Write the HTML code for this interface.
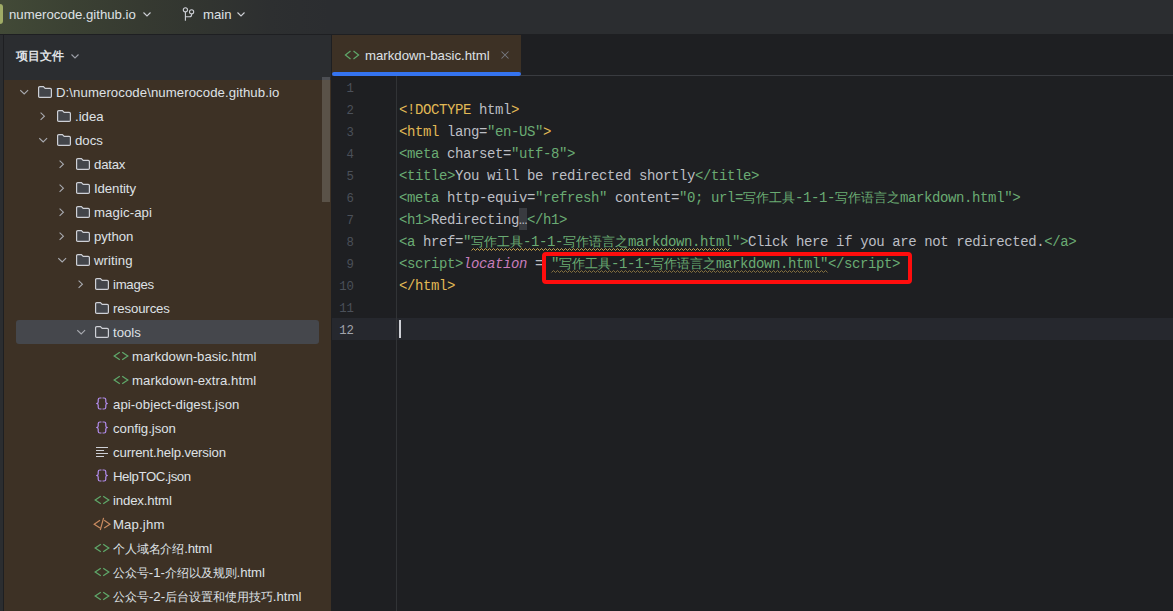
<!DOCTYPE html>
<html><head><meta charset="utf-8">
<style>
*{margin:0;padding:0;box-sizing:border-box}
html,body{width:1173px;height:611px;overflow:hidden;background:#1e1f22;font-family:"Liberation Sans",sans-serif;}
.abs{position:absolute}
#top{left:0;top:0;width:1173px;height:34px;background:linear-gradient(90deg,#424a37 0px,#3b4133 70px,#363a31 140px,#313430 210px,#2d2f30 270px,#2b2d30 330px,#2b2d30 1173px);}
#topline{left:0;top:34px;width:1173px;height:1px;background:#1e1f22}
#proj{left:0;top:4px;width:3px;height:20px;background:#a0ad66;border-radius:0 3px 3px 0}
.ui{color:#dfe1e5;font-size:13.2px;white-space:nowrap;line-height:16px}
#strip{left:0;top:35px;width:4px;height:576px;background:#2b2d30;border-right:1px solid #1e1f22}
#phead{left:4px;top:35px;width:327px;height:45px;background:#2b2d30}
#tree{left:4px;top:80px;width:327px;height:531px;background:#3d3125}
#divider{left:331px;top:34px;width:1px;height:577px;background:#1e1f22}
#sel{left:16px;top:320px;width:303px;height:24px;background:#45474c;border-radius:3px}
#sb{left:322px;top:80px;width:8px;height:122px;background:#5a5248;}
#sbtop{left:322px;top:77px;width:8px;height:3px;background:#4c4e53}
.row{position:absolute;height:24px;line-height:24px;color:#dfe1e5;font-size:13.2px;white-space:nowrap}
#tabbar{left:332px;top:34px;width:841px;height:42px;background:#1e1f22;border-bottom:1px solid #393b40}
#tab{left:332px;top:35px;width:189px;height:41px;background:#3d3125}
#tabline{left:332px;top:72px;width:189px;height:4px;background:#3574f0;border-radius:2px}
#gutterline{left:396px;top:76px;width:1px;height:535px;background:#313336}
#curline{left:332px;top:318px;width:841px;height:22px;background:#26282e}
.ln{position:absolute;left:332px;width:22px;text-align:right;color:#4b5059;font-family:"Liberation Mono",monospace;font-size:12.3px;height:22px;line-height:22px}
.code{position:absolute;left:399px;color:#bcbec4;font-family:"Liberation Mono",monospace;font-size:14px;letter-spacing:-0.4px;height:22px;line-height:22px;white-space:pre}
.g{color:#e2b955}.v{color:#6aab73}.p{color:#c77dbb;font-style:italic}
.ell{}
.cj{display:inline-block;width:13px;overflow:visible;font-size:12.5px;letter-spacing:0;font-weight:300}
#redbox{left:542px;top:252px;width:370px;height:32px;border:4px solid #ff0d0d;border-radius:4px}
#caret{left:399px;top:320px;width:2px;height:18px;background:#ced0d6}
</style></head><body>
<div id="top" class="abs"></div>
<div id="topline" class="abs"></div>
<div id="proj" class="abs"></div>
<div class="abs ui" style="left:9px;top:7px">numerocode.github.io</div>
<svg class="abs" style="left:142px;top:9px" width="10" height="10" viewBox="0 0 10 10"><path d="M1.5 3.5 L5 7 L8.5 3.5" fill="none" stroke="#ced0d6" stroke-width="1.1"/></svg>
<svg class="abs" style="left:182px;top:6px" width="14" height="18" viewBox="0 0 14 18"><circle cx="3.4" cy="3.8" r="2.1" fill="none" stroke="#ced0d6" stroke-width="1.1"/><circle cx="9.6" cy="5.8" r="2.1" fill="none" stroke="#ced0d6" stroke-width="1.1"/><path d="M3.4 5.9 V14.8 M9.6 7.9 V8.7 Q9.6 10.7 7.6 10.7 H3.4" fill="none" stroke="#ced0d6" stroke-width="1.1"/></svg>
<div class="abs ui" style="left:203px;top:7px">main</div>
<svg class="abs" style="left:236px;top:9px" width="10" height="10" viewBox="0 0 10 10"><path d="M1.5 3.5 L5 7 L8.5 3.5" fill="none" stroke="#ced0d6" stroke-width="1.1"/></svg>
<div id="strip" class="abs"></div>
<div id="phead" class="abs"></div>
<div class="abs ui" style="left:16px;top:48px;font-weight:bold;font-size:12px">项目文件</div>
<svg class="abs" style="left:70px;top:51px" width="10" height="10" viewBox="0 0 10 10"><path d="M1.5 3.5 L5 7 L8.5 3.5" fill="none" stroke="#9da0a8" stroke-width="1.1"/></svg>
<div id="tree" class="abs"></div>
<div id="sel" class="abs"></div>
<div id="sb" class="abs"></div>
<div id="sbtop" class="abs"></div>
<div id="divider" class="abs"></div>
<svg class="abs" style="left:20px;top:89px" width="9" height="7" viewBox="0 0 9 7"><path d="M0.3 1.2 L4.2 5 L8.1 1.2" fill="none" stroke="#a8aab0" stroke-width="1.1"/></svg>
<svg class="abs" style="left:38px;top:86px" width="14" height="12" viewBox="0 0 14 12"><path d="M0.6 1.8 Q0.6 0.6 1.8 0.6 H5.4 L7.2 2.4 H12.2 Q13.4 2.4 13.4 3.6 V10.2 Q13.4 11.4 12.2 11.4 H1.8 Q0.6 11.4 0.6 10.2 Z" fill="#43454a" stroke="#ced0d6" stroke-width="1.2"/></svg>
<div class="row" style="left:56px;top:81px;letter-spacing:0.079px">D:\numerocode\numerocode.github.io</div>
<svg class="abs" style="left:40px;top:111px" width="7" height="10" viewBox="0 0 7 10"><path d="M0.6 1.6 L4.4 5.2 L0.6 8.8" fill="none" stroke="#a8aab0" stroke-width="1.1"/></svg>
<svg class="abs" style="left:57px;top:110px" width="14" height="12" viewBox="0 0 14 12"><path d="M0.6 1.8 Q0.6 0.6 1.8 0.6 H5.4 L7.2 2.4 H12.2 Q13.4 2.4 13.4 3.6 V10.2 Q13.4 11.4 12.2 11.4 H1.8 Q0.6 11.4 0.6 10.2 Z" fill="#43454a" stroke="#ced0d6" stroke-width="1.2"/></svg>
<div class="row" style="left:75px;top:105px;letter-spacing:0.000px">.idea</div>
<svg class="abs" style="left:39px;top:137px" width="9" height="7" viewBox="0 0 9 7"><path d="M0.3 1.2 L4.2 5 L8.1 1.2" fill="none" stroke="#a8aab0" stroke-width="1.1"/></svg>
<svg class="abs" style="left:57px;top:134px" width="14" height="12" viewBox="0 0 14 12"><path d="M0.6 1.8 Q0.6 0.6 1.8 0.6 H5.4 L7.2 2.4 H12.2 Q13.4 2.4 13.4 3.6 V10.2 Q13.4 11.4 12.2 11.4 H1.8 Q0.6 11.4 0.6 10.2 Z" fill="#43454a" stroke="#ced0d6" stroke-width="1.2"/></svg>
<div class="row" style="left:75px;top:129px;letter-spacing:0.000px">docs</div>
<svg class="abs" style="left:59px;top:159px" width="7" height="10" viewBox="0 0 7 10"><path d="M0.6 1.6 L4.4 5.2 L0.6 8.8" fill="none" stroke="#a8aab0" stroke-width="1.1"/></svg>
<svg class="abs" style="left:76px;top:158px" width="14" height="12" viewBox="0 0 14 12"><path d="M0.6 1.8 Q0.6 0.6 1.8 0.6 H5.4 L7.2 2.4 H12.2 Q13.4 2.4 13.4 3.6 V10.2 Q13.4 11.4 12.2 11.4 H1.8 Q0.6 11.4 0.6 10.2 Z" fill="#43454a" stroke="#ced0d6" stroke-width="1.2"/></svg>
<div class="row" style="left:94px;top:153px;letter-spacing:-0.200px">datax</div>
<svg class="abs" style="left:59px;top:183px" width="7" height="10" viewBox="0 0 7 10"><path d="M0.6 1.6 L4.4 5.2 L0.6 8.8" fill="none" stroke="#a8aab0" stroke-width="1.1"/></svg>
<svg class="abs" style="left:76px;top:182px" width="14" height="12" viewBox="0 0 14 12"><path d="M0.6 1.8 Q0.6 0.6 1.8 0.6 H5.4 L7.2 2.4 H12.2 Q13.4 2.4 13.4 3.6 V10.2 Q13.4 11.4 12.2 11.4 H1.8 Q0.6 11.4 0.6 10.2 Z" fill="#43454a" stroke="#ced0d6" stroke-width="1.2"/></svg>
<div class="row" style="left:94px;top:177px;letter-spacing:-0.071px">Identity</div>
<svg class="abs" style="left:59px;top:207px" width="7" height="10" viewBox="0 0 7 10"><path d="M0.6 1.6 L4.4 5.2 L0.6 8.8" fill="none" stroke="#a8aab0" stroke-width="1.1"/></svg>
<svg class="abs" style="left:76px;top:206px" width="14" height="12" viewBox="0 0 14 12"><path d="M0.6 1.8 Q0.6 0.6 1.8 0.6 H5.4 L7.2 2.4 H12.2 Q13.4 2.4 13.4 3.6 V10.2 Q13.4 11.4 12.2 11.4 H1.8 Q0.6 11.4 0.6 10.2 Z" fill="#43454a" stroke="#ced0d6" stroke-width="1.2"/></svg>
<div class="row" style="left:94px;top:201px;letter-spacing:0.100px">magic-api</div>
<svg class="abs" style="left:59px;top:231px" width="7" height="10" viewBox="0 0 7 10"><path d="M0.6 1.6 L4.4 5.2 L0.6 8.8" fill="none" stroke="#a8aab0" stroke-width="1.1"/></svg>
<svg class="abs" style="left:76px;top:230px" width="14" height="12" viewBox="0 0 14 12"><path d="M0.6 1.8 Q0.6 0.6 1.8 0.6 H5.4 L7.2 2.4 H12.2 Q13.4 2.4 13.4 3.6 V10.2 Q13.4 11.4 12.2 11.4 H1.8 Q0.6 11.4 0.6 10.2 Z" fill="#43454a" stroke="#ced0d6" stroke-width="1.2"/></svg>
<div class="row" style="left:94px;top:225px;letter-spacing:-0.040px">python</div>
<svg class="abs" style="left:58px;top:257px" width="9" height="7" viewBox="0 0 9 7"><path d="M0.3 1.2 L4.2 5 L8.1 1.2" fill="none" stroke="#a8aab0" stroke-width="1.1"/></svg>
<svg class="abs" style="left:76px;top:254px" width="14" height="12" viewBox="0 0 14 12"><path d="M0.6 1.8 Q0.6 0.6 1.8 0.6 H5.4 L7.2 2.4 H12.2 Q13.4 2.4 13.4 3.6 V10.2 Q13.4 11.4 12.2 11.4 H1.8 Q0.6 11.4 0.6 10.2 Z" fill="#43454a" stroke="#ced0d6" stroke-width="1.2"/></svg>
<div class="row" style="left:94px;top:249px;letter-spacing:0.067px">writing</div>
<svg class="abs" style="left:78px;top:279px" width="7" height="10" viewBox="0 0 7 10"><path d="M0.6 1.6 L4.4 5.2 L0.6 8.8" fill="none" stroke="#a8aab0" stroke-width="1.1"/></svg>
<svg class="abs" style="left:95px;top:278px" width="14" height="12" viewBox="0 0 14 12"><path d="M0.6 1.8 Q0.6 0.6 1.8 0.6 H5.4 L7.2 2.4 H12.2 Q13.4 2.4 13.4 3.6 V10.2 Q13.4 11.4 12.2 11.4 H1.8 Q0.6 11.4 0.6 10.2 Z" fill="#43454a" stroke="#ced0d6" stroke-width="1.2"/></svg>
<div class="row" style="left:113px;top:273px;letter-spacing:-0.280px">images</div>
<svg class="abs" style="left:95px;top:302px" width="14" height="12" viewBox="0 0 14 12"><path d="M0.6 1.8 Q0.6 0.6 1.8 0.6 H5.4 L7.2 2.4 H12.2 Q13.4 2.4 13.4 3.6 V10.2 Q13.4 11.4 12.2 11.4 H1.8 Q0.6 11.4 0.6 10.2 Z" fill="#43454a" stroke="#ced0d6" stroke-width="1.2"/></svg>
<div class="row" style="left:113px;top:297px;letter-spacing:-0.125px">resources</div>
<svg class="abs" style="left:77px;top:329px" width="9" height="7" viewBox="0 0 9 7"><path d="M0.3 1.2 L4.2 5 L8.1 1.2" fill="none" stroke="#a8aab0" stroke-width="1.1"/></svg>
<svg class="abs" style="left:95px;top:326px" width="14" height="12" viewBox="0 0 14 12"><path d="M0.6 1.8 Q0.6 0.6 1.8 0.6 H5.4 L7.2 2.4 H12.2 Q13.4 2.4 13.4 3.6 V10.2 Q13.4 11.4 12.2 11.4 H1.8 Q0.6 11.4 0.6 10.2 Z" fill="#43454a" stroke="#ced0d6" stroke-width="1.2"/></svg>
<div class="row" style="left:113px;top:321px;letter-spacing:0.000px">tools</div>
<svg class="abs" style="left:112px;top:350px" width="17" height="12" viewBox="0 0 17 12"><path d="M7.8 2.3 L2.2 6 L7.8 9.7 M10.2 2.3 L15.8 6 L10.2 9.7" fill="none" stroke="#5fa86a" stroke-width="1.25"/></svg>
<div class="row" style="left:132px;top:345px;letter-spacing:-0.011px">markdown-basic.html</div>
<svg class="abs" style="left:112px;top:374px" width="17" height="12" viewBox="0 0 17 12"><path d="M7.8 2.3 L2.2 6 L7.8 9.7 M10.2 2.3 L15.8 6 L10.2 9.7" fill="none" stroke="#5fa86a" stroke-width="1.25"/></svg>
<div class="row" style="left:132px;top:369px;letter-spacing:0.056px">markdown-extra.html</div>
<svg class="abs" style="left:95px;top:397px" width="14" height="14" viewBox="0 0 14 14"><path d="M6.5 1 H5 Q3.2 1 3.2 2.8 V4.9 Q3.2 6.5 1.2 6.5 Q3.2 6.5 3.2 8.1 V10.2 Q3.2 12 5 12 H6.5 M7.5 1 H9 Q10.8 1 10.8 2.8 V4.9 Q10.8 6.5 12.8 6.5 Q10.8 6.5 10.8 8.1 V10.2 Q10.8 12 9 12 H7.5" fill="none" stroke="#b48ef0" stroke-width="1.2"/></svg>
<div class="row" style="left:113px;top:393px;letter-spacing:0.086px">api-object-digest.json</div>
<svg class="abs" style="left:95px;top:421px" width="14" height="14" viewBox="0 0 14 14"><path d="M6.5 1 H5 Q3.2 1 3.2 2.8 V4.9 Q3.2 6.5 1.2 6.5 Q3.2 6.5 3.2 8.1 V10.2 Q3.2 12 5 12 H6.5 M7.5 1 H9 Q10.8 1 10.8 2.8 V4.9 Q10.8 6.5 12.8 6.5 Q10.8 6.5 10.8 8.1 V10.2 Q10.8 12 9 12 H7.5" fill="none" stroke="#b48ef0" stroke-width="1.2"/></svg>
<div class="row" style="left:113px;top:417px;letter-spacing:-0.010px">config.json</div>
<svg class="abs" style="left:95px;top:446px" width="14" height="12" viewBox="0 0 14 12"><path d="M1 1.5 H13 M1 4.5 H9 M1 7.5 H13 M1 10.5 H9" fill="none" stroke="#ced0d6" stroke-width="1"/></svg>
<div class="row" style="left:113px;top:441px;letter-spacing:-0.142px">current.help.version</div>
<svg class="abs" style="left:95px;top:469px" width="14" height="14" viewBox="0 0 14 14"><path d="M6.5 1 H5 Q3.2 1 3.2 2.8 V4.9 Q3.2 6.5 1.2 6.5 Q3.2 6.5 3.2 8.1 V10.2 Q3.2 12 5 12 H6.5 M7.5 1 H9 Q10.8 1 10.8 2.8 V4.9 Q10.8 6.5 12.8 6.5 Q10.8 6.5 10.8 8.1 V10.2 Q10.8 12 9 12 H7.5" fill="none" stroke="#b48ef0" stroke-width="1.2"/></svg>
<div class="row" style="left:113px;top:465px;letter-spacing:-0.409px">HelpTOC.json</div>
<svg class="abs" style="left:93px;top:494px" width="17" height="12" viewBox="0 0 17 12"><path d="M7.8 2.3 L2.2 6 L7.8 9.7 M10.2 2.3 L15.8 6 L10.2 9.7" fill="none" stroke="#5fa86a" stroke-width="1.25"/></svg>
<div class="row" style="left:113px;top:489px;letter-spacing:-0.144px">index.html</div>
<svg class="abs" style="left:93px;top:517px" width="18" height="14" viewBox="0 0 18 14"><path d="M7 3.3 L1.2 7.2 L7 11.1 M11.2 3.3 L17 7.2 L11.2 11.1 M10.6 0.9 L7.3 13" fill="none" stroke="#c98b60" stroke-width="1.2"/></svg>
<div class="row" style="left:113px;top:513px;letter-spacing:0.133px">Map.jhm</div>
<svg class="abs" style="left:93px;top:542px" width="17" height="12" viewBox="0 0 17 12"><path d="M7.8 2.3 L2.2 6 L7.8 9.7 M10.2 2.3 L15.8 6 L10.2 9.7" fill="none" stroke="#5fa86a" stroke-width="1.25"/></svg>
<div class="row" style="left:113px;top:537px;letter-spacing:-0.150px"><span style="font-size:12px">个</span><span style="font-size:12px">人</span><span style="font-size:12px">域</span><span style="font-size:12px">名</span><span style="font-size:12px">介</span><span style="font-size:12px">绍</span>.html</div>
<svg class="abs" style="left:93px;top:566px" width="17" height="12" viewBox="0 0 17 12"><path d="M7.8 2.3 L2.2 6 L7.8 9.7 M10.2 2.3 L15.8 6 L10.2 9.7" fill="none" stroke="#5fa86a" stroke-width="1.25"/></svg>
<div class="row" style="left:113px;top:561px;letter-spacing:-0.056px"><span style="font-size:12px">公</span><span style="font-size:12px">众</span><span style="font-size:12px">号</span>-1-<span style="font-size:12px">介</span><span style="font-size:12px">绍</span><span style="font-size:12px">以</span><span style="font-size:12px">及</span><span style="font-size:12px">规</span><span style="font-size:12px">则</span>.html</div>
<svg class="abs" style="left:93px;top:590px" width="17" height="12" viewBox="0 0 17 12"><path d="M7.8 2.3 L2.2 6 L7.8 9.7 M10.2 2.3 L15.8 6 L10.2 9.7" fill="none" stroke="#5fa86a" stroke-width="1.25"/></svg>
<div class="row" style="left:113px;top:585px;letter-spacing:-0.026px"><span style="font-size:12px">公</span><span style="font-size:12px">众</span><span style="font-size:12px">号</span>-2-<span style="font-size:12px">后</span><span style="font-size:12px">台</span><span style="font-size:12px">设</span><span style="font-size:12px">置</span><span style="font-size:12px">和</span><span style="font-size:12px">使</span><span style="font-size:12px">用</span><span style="font-size:12px">技</span><span style="font-size:12px">巧</span>.html</div>
<div id="tabbar" class="abs"></div>
<div id="tab" class="abs"></div>
<div id="tabline" class="abs"></div>
<svg class="abs" style="left:344px;top:49px" width="16" height="12" viewBox="0 0 16 12"><path d="M6.5 2 L1.4 6 L6.5 10 M9.5 2 L14.6 6 L9.5 10" fill="none" stroke="#5fa86a" stroke-width="1.2"/></svg>
<div class="abs ui" style="left:365px;top:47.5px">markdown-basic.html</div>
<svg class="abs" style="left:501px;top:51px" width="8" height="8" viewBox="0 0 8 8"><path d="M0.5 0.5 L7.5 7.5 M7.5 0.5 L0.5 7.5" fill="none" stroke="#777a81" stroke-width="1.05"/></svg>
<div id="curline" class="abs"></div>
<div class="abs" style="left:519px;top:208px;width:8px;height:22px;background:#393b40"></div>
<div id="gutterline" class="abs"></div>
<div class="ln" style="top:78px;color:#4b5059">1</div>
<div class="ln" style="top:100px;color:#4b5059">2</div>
<div class="code" style="top:99px"><span class="g">&lt;!DOCTYPE</span> html<span class="g">&gt;</span></div>
<div class="ln" style="top:122px;color:#4b5059">3</div>
<div class="code" style="top:121px"><span class="g">&lt;html</span> lang=<span class="v">"en-US"</span><span class="g">&gt;</span></div>
<div class="ln" style="top:144px;color:#4b5059">4</div>
<div class="code" style="top:143px"><span class="v">&lt;meta</span> charset=<span class="v">"utf-8"</span><span class="v">&gt;</span></div>
<div class="ln" style="top:166px;color:#4b5059">5</div>
<div class="code" style="top:165px"><span class="v">&lt;title&gt;</span>You will be redirected shortly<span class="v">&lt;/title&gt;</span></div>
<div class="ln" style="top:188px;color:#4b5059">6</div>
<div class="code" style="top:187px"><span class="v">&lt;meta</span> http-equiv=<span class="v">"refresh"</span> content=<span class="v">"0; url=<span class="cj">写</span><span class="cj">作</span><span class="cj">工</span><span class="cj">具</span>-1-1-<span class="cj">写</span><span class="cj">作</span><span class="cj">语</span><span class="cj">言</span><span class="cj">之</span>markdown.html"</span><span class="v">&gt;</span></div>
<div class="ln" style="top:210px;color:#4b5059">7</div>
<div class="code" style="top:209px"><span class="v">&lt;h1&gt;</span>Redirecting<span class="ell">…</span><span class="v">&lt;/h1&gt;</span></div>
<div class="ln" style="top:232px;color:#4b5059">8</div>
<div class="code" style="top:231px"><span class="v">&lt;a</span> href=<span class="v">"<span class="cj">写</span><span class="cj">作</span><span class="cj">工</span><span class="cj">具</span>-1-1-<span class="cj">写</span><span class="cj">作</span><span class="cj">语</span><span class="cj">言</span><span class="cj">之</span>markdown.html"</span><span class="v">&gt;</span>Click here if you are not redirected.<span class="v">&lt;/a&gt;</span></div>
<div class="ln" style="top:254px;color:#4b5059">9</div>
<div class="code" style="top:253px"><span class="v">&lt;script&gt;</span><span class="p">location</span> = <span class="v">"<span class="cj">写</span><span class="cj">作</span><span class="cj">工</span><span class="cj">具</span>-1-1-<span class="cj">写</span><span class="cj">作</span><span class="cj">语</span><span class="cj">言</span><span class="cj">之</span>markdown.html"</span><span class="v">&lt;/script&gt;</span></div>
<div class="ln" style="top:276px;color:#4b5059">10</div>
<div class="code" style="top:275px"><span class="g">&lt;/html&gt;</span></div>
<div class="ln" style="top:298px;color:#4b5059">11</div>
<div class="ln" style="top:320px;color:#a1a3ab">12</div>
<svg class="abs" style="left:0;top:0" width="1173" height="611" viewBox="0 0 1173 611"><path d="M471.5 250.5 L473.5 248.5 L475.5 250.5 L477.5 248.5 L479.5 250.5 L481.5 248.5 L483.5 250.5 L485.5 248.5 L487.5 250.5 L489.5 248.5 L491.5 250.5 L493.5 248.5 L495.5 250.5 L497.5 248.5 L499.5 250.5 L501.5 248.5 L503.5 250.5 L505.5 248.5 L507.5 250.5 L509.5 248.5 L511.5 250.5 L513.5 248.5 L515.5 250.5 L517.5 248.5 L519.5 250.5 L521.5 248.5 L523.5 250.5 L525.5 248.5 L527.5 250.5 L529.5 248.5 L531.5 250.5 L533.5 248.5 L535.5 250.5 L537.5 248.5 L539.5 250.5 L541.5 248.5 L543.5 250.5 L545.5 248.5 L547.5 250.5 L549.5 248.5 L551.5 250.5 L553.5 248.5 L555.5 250.5 L557.5 248.5 L559.5 250.5 L561.5 248.5 L563.5 250.5 L565.5 248.5 L567.5 250.5 L569.5 248.5 L571.5 250.5 L573.5 248.5 L575.5 250.5 L577.5 248.5 L579.5 250.5 L581.5 248.5 L583.5 250.5 L585.5 248.5 L587.5 250.5 L589.5 248.5 L591.5 250.5 L593.5 248.5 L595.5 250.5 L597.5 248.5 L599.5 250.5 L601.5 248.5 L603.5 250.5 L605.5 248.5 L607.5 250.5 L609.5 248.5 L611.5 250.5 L613.5 248.5 L615.5 250.5 L617.5 248.5 L619.5 250.5 L621.5 248.5 L623.5 250.5 L625.5 248.5 L627.5 250.5 L629.5 248.5 L631.5 250.5 L633.5 248.5 L635.5 250.5 L637.5 248.5 L639.5 250.5 L641.5 248.5 L643.5 250.5 L645.5 248.5 L647.5 250.5 L649.5 248.5 L651.5 250.5 L653.5 248.5 L655.5 250.5 L657.5 248.5 L659.5 250.5 L661.5 248.5 L663.5 250.5 L665.5 248.5 L667.5 250.5 L669.5 248.5 L671.5 250.5 L673.5 248.5 L675.5 250.5 L677.5 248.5 L679.5 250.5 L681.5 248.5 L683.5 250.5 L685.5 248.5 L687.5 250.5 L689.5 248.5 L691.5 250.5 L693.5 248.5 L695.5 250.5 L697.5 248.5 L699.5 250.5 L701.5 248.5 L703.5 250.5 L705.5 248.5 L707.5 250.5 L709.5 248.5 L711.5 250.5 L713.5 248.5 L715.5 250.5 L717.5 248.5 L719.5 250.5 L721.5 248.5 L723.5 250.5 L725.5 248.5 L727.5 250.5 L729.5 248.5" fill="none" stroke="#c8a550" stroke-width="1"/></svg>
<svg class="abs" style="left:0;top:0" width="1173" height="611" viewBox="0 0 1173 611"><path d="M551.5 272.5 L553.5 270.5 L555.5 272.5 L557.5 270.5 L559.5 272.5 L561.5 270.5 L563.5 272.5 L565.5 270.5 L567.5 272.5 L569.5 270.5 L571.5 272.5 L573.5 270.5 L575.5 272.5 L577.5 270.5 L579.5 272.5 L581.5 270.5 L583.5 272.5 L585.5 270.5 L587.5 272.5 L589.5 270.5 L591.5 272.5 L593.5 270.5 L595.5 272.5 L597.5 270.5 L599.5 272.5 L601.5 270.5 L603.5 272.5 L605.5 270.5 L607.5 272.5 L609.5 270.5 L611.5 272.5 L613.5 270.5 L615.5 272.5 L617.5 270.5 L619.5 272.5 L621.5 270.5 L623.5 272.5 L625.5 270.5 L627.5 272.5 L629.5 270.5 L631.5 272.5 L633.5 270.5 L635.5 272.5 L637.5 270.5 L639.5 272.5 L641.5 270.5 L643.5 272.5 L645.5 270.5 L647.5 272.5 L649.5 270.5 L651.5 272.5 L653.5 270.5 L655.5 272.5 L657.5 270.5 L659.5 272.5 L661.5 270.5 L663.5 272.5 L665.5 270.5 L667.5 272.5 L669.5 270.5 L671.5 272.5 L673.5 270.5 L675.5 272.5 L677.5 270.5 L679.5 272.5 L681.5 270.5 L683.5 272.5 L685.5 270.5 L687.5 272.5 L689.5 270.5 L691.5 272.5 L693.5 270.5 L695.5 272.5 L697.5 270.5 L699.5 272.5 L701.5 270.5 L703.5 272.5 L705.5 270.5 L707.5 272.5 L709.5 270.5 L711.5 272.5 L713.5 270.5 L715.5 272.5 L717.5 270.5 L719.5 272.5 L721.5 270.5 L723.5 272.5 L725.5 270.5 L727.5 272.5 L729.5 270.5 L731.5 272.5 L733.5 270.5 L735.5 272.5 L737.5 270.5 L739.5 272.5 L741.5 270.5 L743.5 272.5 L745.5 270.5 L747.5 272.5 L749.5 270.5 L751.5 272.5 L753.5 270.5 L755.5 272.5 L757.5 270.5 L759.5 272.5 L761.5 270.5 L763.5 272.5 L765.5 270.5 L767.5 272.5 L769.5 270.5 L771.5 272.5 L773.5 270.5 L775.5 272.5 L777.5 270.5 L779.5 272.5 L781.5 270.5 L783.5 272.5 L785.5 270.5 L787.5 272.5 L789.5 270.5 L791.5 272.5 L793.5 270.5 L795.5 272.5 L797.5 270.5 L799.5 272.5 L801.5 270.5 L803.5 272.5 L805.5 270.5 L807.5 272.5 L809.5 270.5 L811.5 272.5 L813.5 270.5 L815.5 272.5 L817.5 270.5 L819.5 272.5 L821.5 270.5 L823.5 272.5 L825.5 270.5 L827.5 272.5" fill="none" stroke="#85703f" stroke-width="1"/></svg>
<div id="redbox" class="abs"></div>
<div id="caret" class="abs"></div>
</body></html>
